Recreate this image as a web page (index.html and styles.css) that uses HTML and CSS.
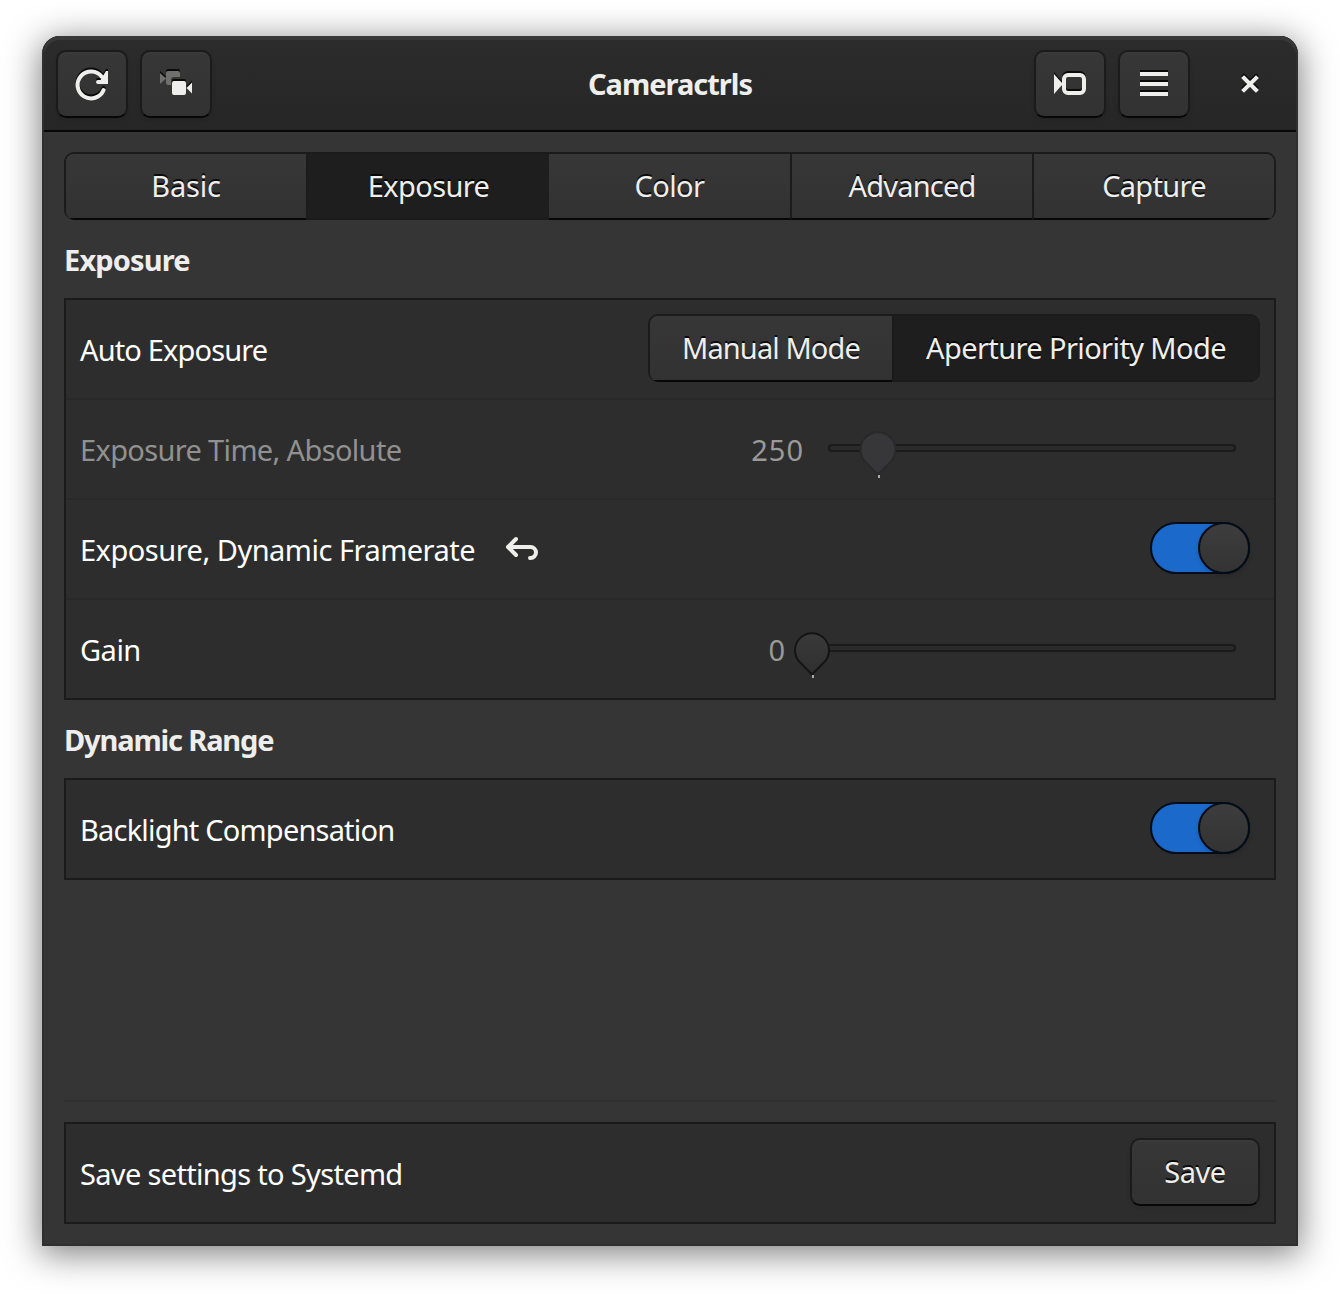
FILE: index.html
```html
<!DOCTYPE html>
<html lang="en">
<head>
<meta charset="utf-8">
<title>Cameractrls</title>
<link rel="stylesheet" href="styles.css">
</head>
<body>
<main class="window">
  <header class="headerbar">
    <div class="group">
      <button class="btn icon-btn" aria-label="Refresh">
        <svg class="icon" width="36" height="36" viewBox="0 0 36 36"><path d="M29.6 24A13.5 13.5 0 1 1 27.8 10.700" fill="none" stroke="currentColor" stroke-width="4" stroke-linecap="round"/><path d="M34 5v13H24a2 2 0 0 1 0-4h2.500L32 5z" fill="currentColor"/></svg>
      </button>
      <button class="btn icon-btn" aria-label="Open in new window">
        <svg class="icon" width="36" height="36" viewBox="0 0 36 36"><path d="M2 7l6 5.500-6 5.500zM10 5h10a2 2 0 0 1 2 2v4h-6a3 3 0 0 0-3 3v5h-3a2 2 0 0 1-2-2V7a2 2 0 0 1 2-2z" fill="#70706f"/><path d="M16 15h10a2 2 0 0 1 2 2v10a2 2 0 0 1-2 2H16a2 2 0 0 1-2-2V17a2 2 0 0 1 2-2zM34 16.500v11L28.500 22z" fill="currentColor"/></svg>
      </button>
    </div>
    <h1 class="title">Cameractrls</h1>
    <div class="group end">
      <button class="btn icon-btn" aria-label="Camera">
        <svg class="icon" width="36" height="36" viewBox="0 0 36 36"><path d="M2 8l8 9v2l-8 9z" fill="currentColor"/><rect x="12" y="9" width="20" height="18" rx="4" fill="none" stroke="currentColor" stroke-width="4"/></svg>
      </button>
      <button class="btn icon-btn" aria-label="Menu">
        <svg class="icon" width="36" height="36" viewBox="0 0 36 36"><path d="M4 6h28v4H4zM4 16h28v4H4zM4 26h28v4H4z" fill="currentColor"/></svg>
      </button>
      <button class="close" aria-label="Close">
        <svg class="icon" width="36" height="36" viewBox="0 0 36 36"><path d="M12 12l12 12M24 12l-12 12" stroke="currentColor" stroke-width="4" stroke-linecap="square" fill="none"/></svg>
      </button>
    </div>
  </header>

  <div class="content">
    <nav class="linked tabs">
      <button class="seg"><span class="t-basic">Basic</span></button>
      <button class="seg active"><span class="t-exposure">Exposure</span></button>
      <button class="seg"><span class="t-color">Color</span></button>
      <button class="seg"><span class="t-advanced">Advanced</span></button>
      <button class="seg"><span class="t-capture">Capture</span></button>
    </nav>

    <h2 class="heading h-exposure">Exposure</h2>
    <section class="card">
      <div class="row">
        <span class="label l-auto">Auto Exposure</span>
        <div class="linked modes">
          <button class="seg manual"><span class="t-manual">Manual Mode</span></button>
          <button class="seg active aperture"><span class="t-aperture">Aperture Priority Mode</span></button>
        </div>
      </div>
      <div class="row disabled">
        <span class="label l-time">Exposure Time, Absolute</span>
        <span class="value v-time">250</span>
        <svg class="scale" width="416" height="60" viewBox="0 0 416 60"><rect x="9" y="25" width="406" height="6" rx="3" fill="#2b2b2b" stroke="#1b1b1b" stroke-width="2"/><path d="M58 54.500L45.500 42A17.500 17.500 0 1 1 70.500 42z" fill="#373739" stroke="#292929" stroke-width="2"/><path d="M58 55h2v3h-2z" fill="#aaa"/></svg>
      </div>
      <div class="row">
        <span class="label l-frame">Exposure, Dynamic Framerate</span>
        <svg class="undo" width="36" height="28" viewBox="0 0 36 28"><path d="M12 4L4 12l8 8M5 12h21.500a5.500 5.500 0 0 1 0 11H26" fill="none" stroke="#eeeeec" stroke-width="4" stroke-linecap="round" stroke-linejoin="round"/></svg>
        <button class="switch" role="switch" aria-checked="true" aria-label="Dynamic framerate"><i class="knob"></i></button>
      </div>
      <div class="row">
        <span class="label l-gain">Gain</span>
        <span class="value v-gain">0</span>
        <svg class="scale last" width="446" height="60" viewBox="0 0 446 60"><defs><linearGradient id="pin" x1="0" y1="0" x2="0" y2="1"><stop offset="0" stop-color="#3a3a3a"/><stop offset="1" stop-color="#2f2f2f"/></linearGradient></defs><rect x="9" y="25" width="436" height="6" rx="3" fill="#2a2a2a" stroke="#1b1b1b" stroke-width="2"/><path d="M22 54.500L9.700 42A17 17 0 1 1 34.300 42z" fill="url(#pin)" stroke="#141414" stroke-width="2"/><path d="M22 55h2v3h-2z" fill="#aaa"/></svg>
      </div>
    </section>

    <h2 class="heading h-range">Dynamic Range</h2>
    <section class="card">
      <div class="row">
        <span class="label l-back">Backlight Compensation</span>
        <button class="switch" role="switch" aria-checked="true" aria-label="Backlight compensation"><i class="knob"></i></button>
      </div>
    </section>

    <footer class="footer">
      <section class="card">
        <div class="row">
          <span class="label l-save">Save settings to Systemd</span>
          <button class="btn save"><span class="t-save">Save</span></button>
        </div>
      </section>
    </footer>
  </div>
</main>
</body>
</html>
```
FILE: styles.css
```css
* { box-sizing: border-box; }
body {
  margin: 0;
  height: 1294px;
  padding: 36px 42px 48px;
  background: #fff;
  color: #fff;
  font: 400 29px/40px "Noto Sans", sans-serif;
  overflow: hidden;
}
button { font: inherit; color: #eeeeec; padding: 0; margin: 0; border: 0; }
h1, h2 { margin: 0; font-size: 29px; font-weight: 700; color: #eeeeec; }
svg { display: block; flex: none; }
span { white-space: nowrap; }

.window {
  display: flex;
  flex-direction: column;
  height: 1210px;
  background: #353535;
  border-radius: 18px 18px 0 0;
  box-shadow: inset 0 0 0 2px #303030, 0 6px 34px 2px rgba(0, 0, 0, .5);
}
.headerbar {
  display: grid;
  grid-template-columns: 1fr auto 1fr;
  align-items: center;
  height: 96px;
  margin: 0 2px;
  padding: 2px 12px 0;
  border-bottom: 2px solid #070707;
  background: linear-gradient(#2c2c2c, #262626);
  border-radius: 16px 16px 0 0;
  box-shadow: inset 0 4px #383838;
}
.group { display: flex; gap: 12px; align-items: center; }
.end { justify-content: flex-end; }
.title { margin-top: -1px; text-align: center; line-height: 40px; letter-spacing: -1px; }

.btn {
  border: 2px solid #1b1b1b;
  border-bottom-color: #070707;
  border-radius: 10px;
  background: linear-gradient(#373737, #323232);
  box-shadow: inset 0 2px rgba(255, 255, 255, .02), 0 2px 4px rgba(0, 0, 0, .08);
  text-shadow: 0 -2px rgba(0, 0, 0, .8);
}
.icon-btn { display: grid; place-items: center; width: 72px; height: 68px; }
.icon { filter: drop-shadow(0 -2px 0 rgba(0, 0, 0, .8)); }
.close { display: grid; place-items: center; width: 68px; height: 68px; margin-left: 14px; background: none; }

.content { flex: 1; display: flex; flex-direction: column; padding: 20px 22px 22px; }
.linked {
  display: flex;
  height: 68px;
  border: 2px solid #1b1b1b;
  border-bottom: 0;
  border-radius: 10px;
  overflow: hidden;
}
.seg {
  flex: 1;
  height: 66px;
  border-bottom: 2px solid #070707;
  background: linear-gradient(#373737, #323232);
  text-shadow: 0 -2px rgba(0, 0, 0, .8);
}
.seg + .seg { border-left: 2px solid #1b1b1b; }
.seg.active { background: #1e1e1e; border-color: #1b1b1b; }
.seg.active + .seg { border-left: 0; }
.tabs .seg { flex: 0 0 242px; }
.tabs .seg:first-child { flex-basis: 240px; }
.tabs .seg.active { flex-basis: 243px; }
.tabs .seg:nth-child(3) { flex-basis: 241px; }
.heading { height: 78px; line-height: 79px; }
.card { border: 2px solid #1b1b1b; background: #2d2d2d; }
.row { display: flex; align-items: center; height: 100px; padding: 0 14px; border-bottom: 2px solid #292929; }
.row:last-child { height: 98px; border-bottom: 0; }
.label { padding-top: 2px; }
.modes { width: 612px; margin-left: auto; margin-bottom: 2px; }
.modes .manual { flex: 0 0 242px; }
.value { margin-left: auto; padding-top: 2px; color: #9a9a99; }
.disabled .label { color: #919190; }
.scale { margin-top: 2px; margin-right: 24px; }
.v-time { margin-right: 16px; letter-spacing: 1px; }
.v-gain { margin-right: 5px; }
.undo { margin-left: 29px; margin-bottom: 1px; }

.h-exposure { letter-spacing: -.85px; }
.h-range { letter-spacing: -1.15px; }
.l-auto { letter-spacing: -.85px; }
.l-time { letter-spacing: -.65px; }
.l-frame { letter-spacing: -.5px; }
.l-gain { letter-spacing: -.5px; }
.l-back { letter-spacing: -.8px; }
.l-save { letter-spacing: -.67px; }
.t-save { letter-spacing: -.5px; }
.t-manual { letter-spacing: -.9px; }
.t-aperture { letter-spacing: -.6px; }
.t-basic { letter-spacing: -.2px; }
.t-exposure, .t-color { letter-spacing: -.6px; }
.t-advanced { letter-spacing: -.8px; }
.t-capture { letter-spacing: -.7px; }

.switch {
  display: flex;
  justify-content: flex-end;
  width: 100px;
  height: 52px;
  margin: 0 10px 2px auto;
  border: 2px solid #030c17;
  border-radius: 26px;
  background: #1b6acb;
}
.knob {
  width: 52px;
  height: 52px;
  margin: -2px;
  flex: none;
  border: 2px solid #030c17;
  border-radius: 50%;
  background: linear-gradient(#3d3d3d, #333);
  box-shadow: 0 2px 4px rgba(0, 0, 0, .15);
}
.footer { margin-top: auto; padding-top: 20px; border-top: 2px solid #303030; }
.save { width: 130px; height: 68px; margin-left: auto; margin-bottom: 2px; }
```
